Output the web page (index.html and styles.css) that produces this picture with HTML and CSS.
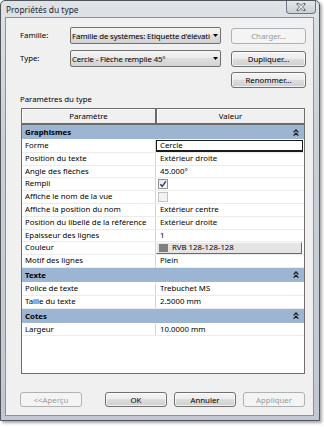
FILE: index.html
```html
<!DOCTYPE html>
<html lang="fr">
<head>
<meta charset="utf-8">
<title>Propriétés du type</title>
<link rel="stylesheet" href="styles.css">
</head>
<body>
<div class="window">
  <div class="titlebar">
    <span class="title">Propriétés du type</span>
    <div class="close">
      <svg width="10" height="8" viewBox="0 0 10 8"><path d="M2 1 L8 7 M8 1 L2 7" stroke="#55606b" stroke-width="2.6" stroke-linecap="square"/><path d="M2 1 L8 7 M8 1 L2 7" stroke="#f4f6f8" stroke-width="1.2"/></svg>
    </div>
  </div>
  <div class="client">
    <div class="top">
      <span class="lbl">Famille:</span>
      <div class="combo"><span class="ctext">Famille de systèmes: Etiquette d'élévati</span><svg class="arrow" width="5" height="3" viewBox="0 0 5 3"><path d="M0 0 H5 L2.5 3 Z" fill="#000"/></svg></div>
      <button class="btn dis" disabled>Charger...</button>
      <span class="lbl">Type:</span>
      <div class="combo"><span class="ctext">Cercle - Flèche remplie 45°</span><svg class="arrow" width="5" height="3" viewBox="0 0 5 3"><path d="M0 0 H5 L2.5 3 Z" fill="#000"/></svg></div>
      <button class="btn">Dupliquer...</button>
      <button class="btn c3">Renommer...</button>
    </div>
    <div class="seclbl">Paramètres du type</div>
    <div class="grid">
      <div class="thead"><div class="th th1">Paramètre</div><div class="th th2">Valeur</div></div>
      <div class="group"><span>Graphismes</span><svg class="chev" width="6" height="7" viewBox="0 0 6 7"><path d="M0.6 3.4 L3 1 L5.4 3.4 M0.6 6.6 L3 4.2 L5.4 6.6" fill="none" stroke="#1f1f1f" stroke-width="1.3"/></svg></div>
      <div class="row"><div class="p">Forme</div><div class="v edit">Cercle</div></div>
      <div class="row"><div class="p">Position du texte</div><div class="v">Extérieur droite</div></div>
      <div class="row"><div class="p">Angle des flèches</div><div class="v">45.000°</div></div>
      <div class="row"><div class="p">Rempli</div><div class="v"><span class="cb on"><svg width="8" height="8" viewBox="0 0 8 8"><path d="M1.3 4.2 L3.2 6.3 L6.8 1.3" fill="none" stroke="#2b3e6a" stroke-width="1.4"/></svg></span></div></div>
      <div class="row"><div class="p">Affiche le nom de la vue</div><div class="v"><span class="cb off"></span></div></div>
      <div class="row"><div class="p">Affiche la position du nom</div><div class="v">Extérieur centre</div></div>
      <div class="row"><div class="p">Position du libellé de la référence</div><div class="v">Extérieur droite</div></div>
      <div class="row"><div class="p">Epaisseur des lignes</div><div class="v">1</div></div>
      <div class="row"><div class="p">Couleur</div><div class="v color"><span class="swatch"></span>RVB 128-128-128</div></div>
      <div class="row"><div class="p">Motif des lignes</div><div class="v">Plein</div></div>
      <div class="group"><span>Texte</span><svg class="chev" width="6" height="7" viewBox="0 0 6 7"><path d="M0.6 3.4 L3 1 L5.4 3.4 M0.6 6.6 L3 4.2 L5.4 6.6" fill="none" stroke="#1f1f1f" stroke-width="1.3"/></svg></div>
      <div class="row"><div class="p">Police de texte</div><div class="v">Trebuchet MS</div></div>
      <div class="row"><div class="p">Taille du texte</div><div class="v">2.5000 mm</div></div>
      <div class="group"><span>Cotes</span><svg class="chev" width="6" height="7" viewBox="0 0 6 7"><path d="M0.6 3.4 L3 1 L5.4 3.4 M0.6 6.6 L3 4.2 L5.4 6.6" fill="none" stroke="#1f1f1f" stroke-width="1.3"/></svg></div>
      <div class="row"><div class="p">Largeur</div><div class="v">10.0000 mm</div></div>
    </div>
    <div class="footer">
      <button class="btn fb dis" disabled>&lt;&lt;Aperçu</button>
      <div class="fright">
        <button class="btn fb">OK</button>
        <button class="btn fb">Annuler</button>
        <button class="btn fb dis" disabled>Appliquer</button>
      </div>
    </div>
  </div>
</div>
</body>
</html>
```

FILE: styles.css
```css
* { box-sizing: border-box; margin: 0; padding: 0; }
html, body { width: 324px; height: 427px; overflow: hidden; }
body {
  background: #ffffff;
  font-family: "Noto Sans", "Open Sans", sans-serif;
  font-size: 7.8px;
  color: #000;
}
.window {
  width: 320px;
  height: 421px;
  border: 1px solid #4f555b;
  border-radius: 5px 5px 0 0;
  background: linear-gradient(#dfe3e8, #cbd1d7 30%, #c1c8cf);
  display: flex;
  flex-direction: column;
  padding: 0 5px 4px 4px;
  box-shadow: 2px 2px 3px rgba(0,0,0,0.35);
}
.titlebar {
  height: 16px;
  display: flex;
  align-items: flex-start;
  flex: none;
}
.title {
  margin-left: 1px;
  line-height: 18px;
  font-size: 8.4px;
  color: #1b2633;
}
.close {
  margin-left: auto;
  margin-right: -2px;
  width: 30px;
  height: 13px;
  border: 1px solid #6c7783;
  border-top: none;
  border-radius: 0 0 4px 4px;
  background: linear-gradient(#e3e7eb, #c9d0d7);
  display: flex;
  align-items: center;
  justify-content: center;
}
.client {
  flex: 1;
  border: 1px solid #89919a;
  background: #f0f0f0;
  padding: 9px 8px 0 14px;
  display: flex;
  flex-direction: column;
}
.top {
  display: grid;
  grid-template-columns: 50px 151px 85px;
  grid-template-rows: 23px 22px 16px;
  align-items: start;
}
.lbl { line-height: 17px; }
.combo {
  height: 17px;
  border: 1px solid #707070;
  border-radius: 2px;
  background: linear-gradient(#f4f4f4, #ebebeb 50%, #dedede 50%, #d3d3d3);
  display: flex;
  align-items: center;
  padding: 0 2px 0 1px;
  overflow: hidden;
}
.ctext { flex: 1; white-space: nowrap; overflow: hidden; letter-spacing: -0.12px; }
.arrow { flex: none; margin-left: 1px; }
.btn {
  font-family: inherit;
  font-size: 7.8px;
  color: #000;
  height: 16px;
  border: 1px solid #707070;
  border-radius: 3px;
  background: linear-gradient(#f4f4f4, #ebebeb 50%, #dddddd 50%, #cfcfcf);
  box-shadow: inset 0 0 0 1px rgba(255,255,255,0.7);
  margin-top: 1px;
}
.top .btn { width: 75px; justify-self: end; }
.btn.dis {
  color: #9a9a9a;
  border-color: #adb2b5;
  background: #f4f4f4;
  box-shadow: none;
}
.c3 { grid-column: 3; margin-top: 0; }
.seclbl { margin-top: 5px; line-height: 12px; }
.grid {
  margin: 3px 0 0 1px;
  width: 284px;
  height: 266px;
  border: 1px solid #6e6e6e;
  background: #fff;
  flex: none;
  display: flex;
  flex-direction: column;
}
.thead {
  display: flex;
  height: 16px;
  flex: none;
}
.th {
  background: #f0f0f0;
  border-bottom: 2px solid #6a6a6a;
  text-align: center;
  line-height: 14px;
  box-shadow: inset 1px 1px 0 #ffffff;
}
.th1 { width: 135px; border-right: 2px solid #6a6a6a; }
.th2 { flex: 1; }
.group {
  height: 15px;
  flex: none;
  background: #9cb5d2;
  font-weight: bold;
  display: flex;
  align-items: center;
  padding: 0 5px 0 3px;
  border-bottom: 1px solid #ffffff;
}
.chev { margin-left: auto; }
.row {
  height: 12.8px;
  flex: none;
  display: flex;
  border-bottom: 1px solid #ebebeb;
}
.p {
  width: 134px;
  border-right: 1px solid #d4d4d4;
  padding-left: 3px;
  line-height: 11.8px;
  white-space: nowrap;
}
.v {
  flex: 1;
  padding-left: 4px;
  line-height: 11.8px;
  white-space: nowrap;
  display: flex;
  align-items: center;
}
.v.edit {
  border: 1px solid #1a1a1a;
  border-bottom-width: 2px;
  margin-right: 1px;
  padding-left: 3px;
}
.cb {
  width: 10px;
  height: 10px;
  margin-left: -2px;
  display: flex;
  align-items: center;
  justify-content: center;
}
.cb.on {
  border: 1px solid #8e8f8f;
  background: linear-gradient(#e6e6e6, #fbfbfb);
}
.cb.off {
  border: 1px solid #c2c2c2;
  background: #f2f2f2;
}
.v.color {
  background: #e4e4e4;
  border-top: 1px solid #fafafa;
  border-left: 1px solid #fafafa;
  border-right: 1px solid #6a6a6a;
  border-bottom: 1px solid #6a6a6a;
  margin-right: 2px;
  padding-left: 2px;
}
.swatch {
  width: 9px;
  height: 8px;
  background: #808080;
  margin-right: 4px;
}
.footer {
  margin-top: 18px;
  display: flex;
}
.fright { margin-left: auto; display: flex; gap: 7px; }
.btn.fb { width: 62px; height: 15px; margin-top: 0; }
```
